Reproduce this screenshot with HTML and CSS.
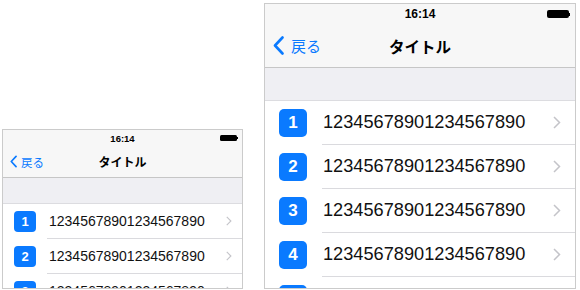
FILE: index.html
```html
<!DOCTYPE html>
<html lang="ja">

<head>
    <meta charset="utf-8">
    <meta name="viewport" content="width=device-width, initial-scale=1">
    <title>タイトル - 一覧</title>
    <link rel="stylesheet" href="styles.css">
</head>

<body>
    <div class="screens">
        <div class="phone phone-small">
            <div class="status">
                <span></span>
                <span class="time">16:14</span>
                <span class="battery"><span class="cell"></span><span class="nub"></span></span>
            </div>
            <div class="navbar">
                <a class="back" href="#">
                    <svg viewBox="0 0 11 19"><path d="M9.5 1.5 L2 9.5 L9.5 17.5"/></svg>戻る
                </a>
                <span class="title">タイトル</span>
                <span></span>
            </div>
            <div class="section-gap"></div>
            <ul class="list">
                <li class="row"><span class="badge">1</span><span class="row-body"><span class="label">12345678901234567890</span><svg class="disclosure" viewBox="0 0 8 13"><path d="M1 1 L6.5 6.5 L1 12"/></svg></span></li>
                <li class="row"><span class="badge">2</span><span class="row-body"><span class="label">12345678901234567890</span><svg class="disclosure" viewBox="0 0 8 13"><path d="M1 1 L6.5 6.5 L1 12"/></svg></span></li>
                <li class="row"><span class="badge">3</span><span class="row-body"><span class="label">12345678901234567890</span><svg class="disclosure" viewBox="0 0 8 13"><path d="M1 1 L6.5 6.5 L1 12"/></svg></span></li>
            </ul>
        </div>

        <div class="phone phone-large">
            <div class="status">
                <span></span>
                <span class="time">16:14</span>
                <span class="battery"><span class="cell"></span><span class="nub"></span></span>
            </div>
            <div class="navbar">
                <a class="back" href="#">
                    <svg viewBox="0 0 11 19"><path d="M9.5 1.5 L2 9.5 L9.5 17.5"/></svg>戻る
                </a>
                <span class="title">タイトル</span>
                <span></span>
            </div>
            <div class="section-gap"></div>
            <ul class="list">
                <li class="row"><span class="badge">1</span><span class="row-body"><span class="label">12345678901234567890</span><svg class="disclosure" viewBox="0 0 8 13"><path d="M1 1 L6.5 6.5 L1 12"/></svg></span></li>
                <li class="row"><span class="badge">2</span><span class="row-body"><span class="label">12345678901234567890</span><svg class="disclosure" viewBox="0 0 8 13"><path d="M1 1 L6.5 6.5 L1 12"/></svg></span></li>
                <li class="row"><span class="badge">3</span><span class="row-body"><span class="label">12345678901234567890</span><svg class="disclosure" viewBox="0 0 8 13"><path d="M1 1 L6.5 6.5 L1 12"/></svg></span></li>
                <li class="row"><span class="badge">4</span><span class="row-body"><span class="label">12345678901234567890</span><svg class="disclosure" viewBox="0 0 8 13"><path d="M1 1 L6.5 6.5 L1 12"/></svg></span></li>
                <li class="row"><span class="badge">5</span><span class="row-body"><span class="label">12345678901234567890</span><svg class="disclosure" viewBox="0 0 8 13"><path d="M1 1 L6.5 6.5 L1 12"/></svg></span></li>
            </ul>
        </div>
    </div>
</body>

</html>
```

FILE: styles.css
```css
body {
    margin: 0;
    background-color: #fff;
    font-family: 'Liberation Sans', 'Noto Sans CJK JP', sans-serif;
}

.screens {
    display: flex;
    align-items: flex-end;
    gap: 21px;
    height: 290px;
    padding: 0 0 1px 2px;
    box-sizing: border-box;
}

/* phone frame */
.phone {
    flex-shrink: 0;
    border: 1px solid #cbcbcb;
    background-color: #fff;
    overflow: hidden;
    box-sizing: border-box;
}

.status {
    display: grid;
    grid-template-columns: 1fr auto 1fr;
    align-items: center;
    background-color: #f7f7f7;
}

.time {
    font-weight: bold;
    color: #000;
}

.battery {
    justify-self: end;
    display: flex;
    align-items: center;
}

.battery .cell {
    background-color: #000;
    border-radius: 2px;
}

.battery .nub {
    background-color: #000;
    width: 1px;
}

.navbar {
    display: grid;
    grid-template-columns: 1fr auto 1fr;
    align-items: center;
    background-color: #f7f7f7;
    border-bottom: 1px solid #c6c6c6;
    box-sizing: border-box;
    font-family: 'Noto Sans CJK JP', sans-serif;
}

.back {
    display: flex;
    align-items: center;
    color: #0a7aff;
    text-decoration: none;
}

.back svg path {
    fill: none;
    stroke: #0a7aff;
    stroke-width: 2.6;
    stroke-linecap: round;
    stroke-linejoin: round;
}

.title {
    font-weight: bold;
    color: #000;
}

.section-gap {
    background-color: #efeff3;
    border-bottom: 1px solid #dcdce0;
}

.list {
    list-style: none;
    margin: 0;
    padding: 0;
}

.row {
    display: flex;
    align-items: center;
}

.badge {
    flex-shrink: 0;
    display: flex;
    align-items: center;
    justify-content: center;
    background-color: #0a7aff;
    color: #fff;
    font-weight: bold;
}

.row-body {
    flex: 1;
    display: flex;
    align-items: center;
    justify-content: space-between;
    align-self: stretch;
    border-bottom: 1px solid #dadade;
}

.label {
    color: #111;
}

.disclosure path {
    fill: none;
    stroke: #c4c4c9;
    stroke-width: 1.5;
}

/* small screen */
.phone-small {
    width: 241px;
    height: 160px;
}

.phone-small .status {
    height: 16px;
}

.phone-small .time {
    font-size: 9.5px;
}

.phone-small .battery {
    padding-right: 4px;
}

.phone-small .battery .cell {
    width: 17px;
    height: 6px;
    border-radius: 1.5px;
}

.phone-small .battery .nub {
    height: 2px;
}

.phone-small .navbar {
    height: 32px;
}

.phone-small .back {
    font-size: 11.5px;
    padding-left: 7px;
    gap: 4px;
}

.phone-small .back svg {
    width: 7px;
    height: 13px;
}

.phone-small .title {
    font-size: 12px;
}

.phone-small .section-gap {
    height: 25px;
}

.phone-small .row {
    height: 35px;
}

.phone-small .badge {
    width: 22px;
    height: 21px;
    border-radius: 4px;
    font-size: 13px;
    margin: 0 11px 0 11px;
}

.phone-small .label {
    font-size: 14px;
    padding-left: 2px;
}

.phone-small .disclosure {
    width: 6px;
    height: 10px;
    margin-right: 10px;
}

/* large screen */
.phone-large {
    width: 312px;
    height: 286px;
}

.phone-large .status {
    height: 20px;
}

.phone-large .time {
    font-size: 12px;
}

.phone-large .battery {
    padding-right: 5px;
}

.phone-large .battery .cell {
    width: 22px;
    height: 8px;
}

.phone-large .battery .nub {
    width: 1.5px;
    height: 3px;
}

.phone-large .navbar {
    height: 44px;
}

.phone-large .back {
    font-size: 15px;
    padding-left: 8px;
    gap: 7px;
}

.phone-large .back svg {
    width: 11px;
    height: 19px;
}

.phone-large .title {
    font-size: 15.5px;
}

.phone-large .section-gap {
    height: 32px;
}

.phone-large .row {
    height: 44px;
}

.phone-large .badge {
    width: 28px;
    height: 28px;
    border-radius: 5px;
    font-size: 17px;
    margin: 0 15px 0 14px;
}

.phone-large .label {
    font-size: 18.2px;
    padding-left: 1px;
}

.phone-large .disclosure {
    width: 8px;
    height: 13px;
    margin-right: 14px;
}
```
